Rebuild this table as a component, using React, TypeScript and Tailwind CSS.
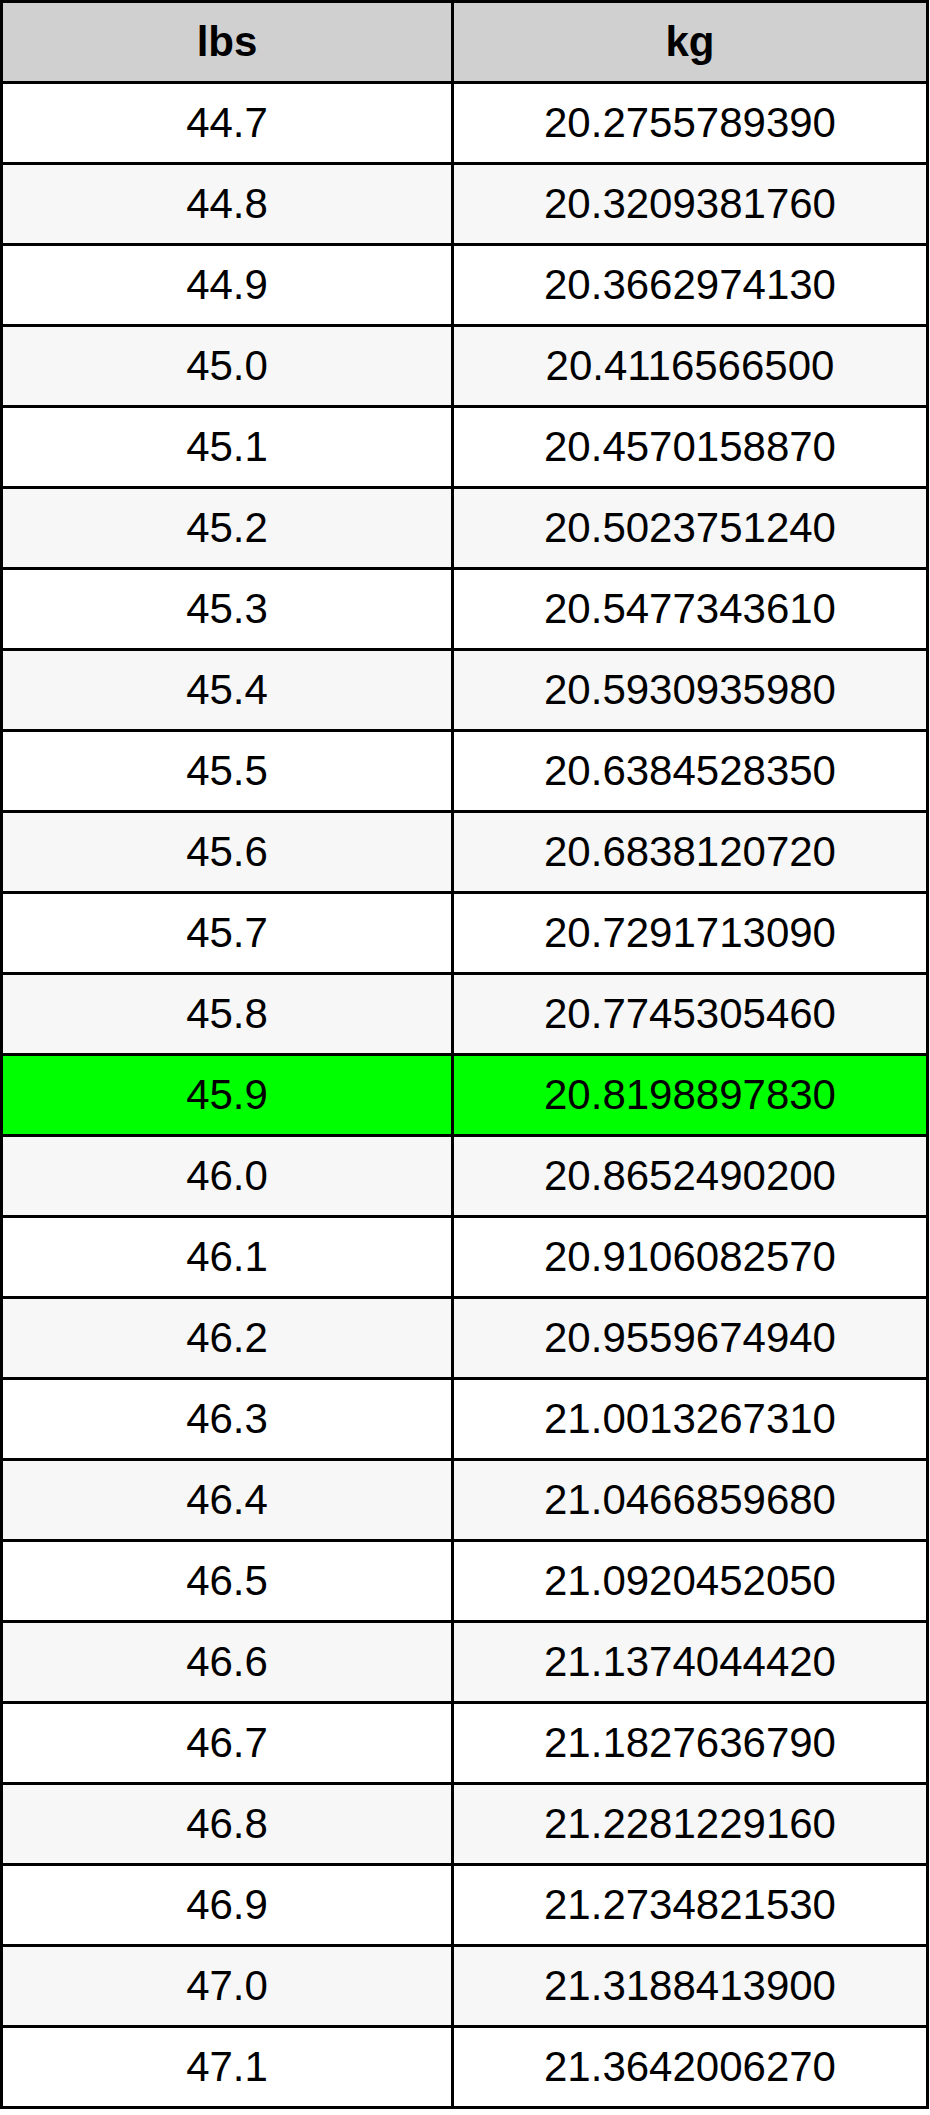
const rows: [string, string][] = [
	['44.7', '20.2755789390'],
	['44.8', '20.3209381760'],
	['44.9', '20.3662974130'],
	['45.0', '20.4116566500'],
	['45.1', '20.4570158870'],
	['45.2', '20.5023751240'],
	['45.3', '20.5477343610'],
	['45.4', '20.5930935980'],
	['45.5', '20.6384528350'],
	['45.6', '20.6838120720'],
	['45.7', '20.7291713090'],
	['45.8', '20.7745305460'],
	['45.9', '20.8198897830'],
	['46.0', '20.8652490200'],
	['46.1', '20.9106082570'],
	['46.2', '20.9559674940'],
	['46.3', '21.0013267310'],
	['46.4', '21.0466859680'],
	['46.5', '21.0920452050'],
	['46.6', '21.1374044420'],
	['46.7', '21.1827636790'],
	['46.8', '21.2281229160'],
	['46.9', '21.2734821530'],
	['47.0', '21.3188413900'],
	['47.1', '21.3642006270'],
]

const App = () => {
	return (
		<div className="bg-white font-['Liberation_Sans',Arial,sans-serif] text-black">
			<div className="grid w-[929px] grid-cols-[448px_472px] gap-[3px] bg-black p-[3px] text-[42px] leading-none">
				<div className="flex h-[78px] items-center justify-center bg-[#d0d0d0] font-bold">
					lbs
				</div>
				<div className="flex h-[78px] items-center justify-center bg-[#d0d0d0] font-bold">
					kg
				</div>
				{rows.map(([lbs, kg], i) => {
					const bg =
						lbs === '45.9'
							? 'bg-[#00ff00]'
							: i % 2 === 0
							? 'bg-white'
							: 'bg-[#f7f7f7]'
					return [
						<div
							key={lbs + '-a'}
							className={`flex h-[78px] items-center justify-center ${bg}`}
						>
							{lbs}
						</div>,
						<div
							key={lbs + '-b'}
							className={`flex h-[78px] items-center justify-center ${bg}`}
						>
							{kg}
						</div>,
					]
				})}
			</div>
		</div>
	)
}

export default App
